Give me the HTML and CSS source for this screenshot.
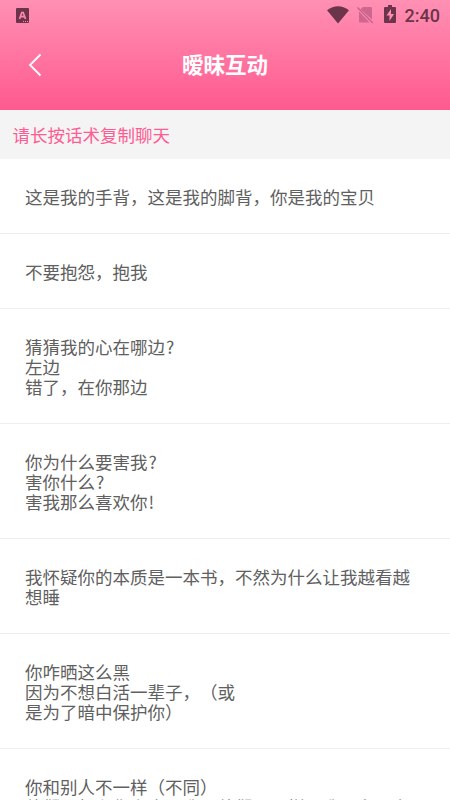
FILE: index.html
```html
<!DOCTYPE html>
<html lang="zh-CN">
<head>
<meta charset="utf-8">
<title>暧昧互动</title>
<link rel="stylesheet" href="styles.css">
</head>
<body>
<header class="header">
  <div class="status">
    <svg class="app-icon" width="13" height="15" viewBox="0 0 13 15"><rect width="13" height="15" rx="1" fill="#6b344a"/><path d="M3.5 11 5.8 4.5h1.4L9.5 11M4.5 8.7h4" fill="none" stroke="#ff86ae" stroke-width="1.7"/><path d="M7 13.5h5" stroke="#ff86ae" stroke-dasharray="1 1"/></svg>
    <div class="status-right">
      <svg class="wifi" width="22" height="18" viewBox="0 0 22 18"><path d="M0 4.3Q11-3.6 22 4.3L11 17.5Z" fill="#6b344a"/></svg>
      <svg class="sim" width="17" height="18" viewBox="0 0 17 18"><path d="M6 1h8q1 0 1 1v11.5L3.5 3.2ZM2 5.2 12.5 16.5H3q-1 0-1-1Z" fill="#ce668f"/><path d="M.5 1.5 15.8 17" stroke="#c4638a" stroke-width="1.3"/></svg>
      <svg class="battery" width="12" height="18" viewBox="0 0 12 18"><path d="M4 0h4v2h3q1 0 1 1v14q0 1-1 1H1q-1 0-1-1V3q0-1 1-1h3Z" fill="#6b344a"/><path d="M7 4 2.5 10.5h3V16L10 9H7Z" fill="#ff8bb1"/></svg>
      <span class="time">2:40</span>
    </div>
  </div>
  <div class="navbar">
    <svg class="back" width="14" height="24" viewBox="0 0 14 24"><path d="M12.5 1.5 2 12 12.5 22.5" fill="none" stroke="#fff" stroke-width="1.8"/></svg>
    <h1 class="title">暧昧互动</h1>
  </div>
</header>
<p class="hint">请长按话术复制聊天</p>
<ul class="list">
  <li class="item">这是我的手背，这是我的脚背，你是我的宝贝</li>
  <li class="item">不要抱怨，抱我</li>
  <li class="item">猜猜我的心在哪边<span class="mark">?</span><br>左边<br>错了，在你那边</li>
  <li class="item">你为什么要害我<span class="mark">?</span><br>害你什么<span class="mark">?</span><br>害我那么喜欢你<span class="mark">!</span></li>
  <li class="item">我怀疑你的本质是一本书，不然为什么让我越看越想睡</li>
  <li class="item">你咋晒这么黑<br>因为不想白活一辈子，（或<br>是为了暗中保护你）</li>
  <li class="item">你和别人不一样（不同）<br>他们只想和你上床，我跟他们不一样，我要在阳台</li>
</ul>
</body>
</html>
```

FILE: styles.css
```css
* { box-sizing: border-box; margin: 0; padding: 0; }
body {
  height: 800px;
  overflow: hidden;
  background: #fff;
  font-family: "Noto Sans CJK SC", sans-serif;
  text-spacing-trim: space-all;
}
.header {
  height: 110px;
  background: linear-gradient(#ff90b4, #ff5a8f);
}
.status {
  display: flex;
  justify-content: space-between;
  height: 30px;
  padding: 0 10px 0 16px;
}
.app-icon { margin-top: 8px; }
.status-right { display: flex; }
.wifi { margin: 6px 8px 0 0; }
.sim { margin: 6px 10px 0 0; }
.battery { margin: 5px 9px 0 0; }
.time {
  margin-top: 6px;
  font: 500 18px/20px Roboto, sans-serif;
  color: #6b344a;
}
.navbar {
  display: grid;
  grid-template-columns: 60px 1fr 60px;
  align-items: center;
  height: 70px;
}
.back { margin-left: 28px; }
.title {
  padding-bottom: 2px;
  font-size: 21.5px;
  line-height: 30px;
  font-weight: 700;
  text-align: center;
  color: #fff;
}
.hint {
  height: 49px;
  padding-left: 12.5px;
  background: #f4f4f4;
  font-size: 17.5px;
  line-height: 49px;
  color: #ff5c93;
}
.list { list-style: none; }
.item {
  padding: 28px 25px 26px;
  border-bottom: 1px solid #eee;
  font-size: 17.5px;
  line-height: 20px;
  color: #606060;
}
.mark { margin-left: 1px; }
```
